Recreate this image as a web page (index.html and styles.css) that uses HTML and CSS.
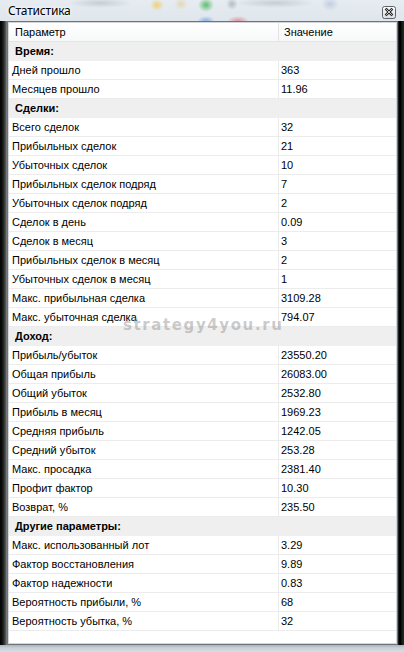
FILE: index.html
```
<!DOCTYPE html>
<html lang="ru">
<head>
<meta charset="utf-8">
<title>Статистика</title>
<link rel="stylesheet" href="styles.css">
</head>
<body>
<div class="window">
  <div class="titlebar">
    <span class="title">Статистика</span>
    <svg class="close" width="14" height="13" viewBox="0 0 14 13">
      <defs>
        <linearGradient id="cb" x1="0" y1="0" x2="0" y2="1">
          <stop offset="0" stop-color="#fbfcfd"/>
          <stop offset="1" stop-color="#d9dee3"/>
        </linearGradient>
      </defs>
      <rect x="0.5" y="0.5" width="13" height="12" rx="2" fill="url(#cb)" stroke="#5e6368"/>
      <path d="M4.5 3.5 L9.5 8.5 M9.5 3.5 L4.5 8.5" stroke="#2b2b2b" stroke-width="2.6" stroke-linecap="square"/>
      <path d="M4.5 3.5 L9.5 8.5 M9.5 3.5 L4.5 8.5" stroke="#f2f2f2" stroke-width="0.8" stroke-linecap="square"/>
    </svg>
  </div>
  <div class="frame">
    <div class="client">
      <div class="list">
        <div class="header"><div class="k">Параметр</div><div class="v">Значение</div></div>
        <div class="group">Время:</div>
        <div class="row"><div class="k">Дней прошло</div><div class="v">363</div></div>
        <div class="row"><div class="k">Месяцев прошло</div><div class="v">11.96</div></div>
        <div class="group">Сделки:</div>
        <div class="row"><div class="k">Всего сделок</div><div class="v">32</div></div>
        <div class="row"><div class="k">Прибыльных сделок</div><div class="v">21</div></div>
        <div class="row"><div class="k">Убыточных сделок</div><div class="v">10</div></div>
        <div class="row"><div class="k">Прибыльных сделок подряд</div><div class="v">7</div></div>
        <div class="row"><div class="k">Убыточных сделок подряд</div><div class="v">2</div></div>
        <div class="row"><div class="k">Сделок в день</div><div class="v">0.09</div></div>
        <div class="row"><div class="k">Сделок в месяц</div><div class="v">3</div></div>
        <div class="row"><div class="k">Прибыльных сделок в месяц</div><div class="v">2</div></div>
        <div class="row"><div class="k">Убыточных сделок в месяц</div><div class="v">1</div></div>
        <div class="row"><div class="k">Макс. прибыльная сделка</div><div class="v">3109.28</div></div>
        <div class="row"><div class="k">Макс. убыточная сделка</div><div class="v">794.07</div></div>
        <div class="group">Доход:</div>
        <div class="row"><div class="k">Прибыль/убыток</div><div class="v">23550.20</div></div>
        <div class="row"><div class="k">Общая прибыль</div><div class="v">26083.00</div></div>
        <div class="row"><div class="k">Общий убыток</div><div class="v">2532.80</div></div>
        <div class="row"><div class="k">Прибыль в месяц</div><div class="v">1969.23</div></div>
        <div class="row"><div class="k">Средняя прибыль</div><div class="v">1242.05</div></div>
        <div class="row"><div class="k">Средний убыток</div><div class="v">253.28</div></div>
        <div class="row"><div class="k">Макс. просадка</div><div class="v">2381.40</div></div>
        <div class="row"><div class="k">Профит фактор</div><div class="v">10.30</div></div>
        <div class="row"><div class="k">Возврат, %</div><div class="v">235.50</div></div>
        <div class="group">Другие параметры:</div>
        <div class="row"><div class="k">Макс. использованный лот</div><div class="v">3.29</div></div>
        <div class="row"><div class="k">Фактор восстановления</div><div class="v">9.89</div></div>
        <div class="row"><div class="k">Фактор надежности</div><div class="v">0.83</div></div>
        <div class="row"><div class="k">Вероятность прибыли, %</div><div class="v">68</div></div>
        <div class="row"><div class="k">Вероятность убытка, %</div><div class="v">32</div></div>
        <div class="watermark">strategy4you.ru</div>
      </div>
    </div>
  </div>
  <div class="bottom"></div>
</div>
</body>
</html>
```
FILE: styles.css
```
* { box-sizing: border-box; margin: 0; padding: 0; }
html, body { width: 404px; height: 652px; overflow: hidden; }
body {
  font-family: "Liberation Sans", Arial, sans-serif;
  font-size: 11px;
  color: #000;
  background: #dfe6ec;
}
.window {
  width: 404px;
  height: 652px;
  display: flex;
  flex-direction: column;
}
.titlebar {
  height: 21px;
  flex: none;
  display: flex;
  align-items: flex-start;
  padding: 0 8px;
  background:
    radial-gradient(ellipse 7px 6px at 157px 5px, rgba(240, 200, 80, .75), rgba(240, 200, 80, 0)),
    radial-gradient(ellipse 7px 6px at 181px 4px, rgba(225, 200, 130, .55), rgba(225, 200, 130, 0)),
    radial-gradient(ellipse 8px 7px at 206px 5px, rgba(70, 180, 90, .85), rgba(70, 180, 90, 0)),
    radial-gradient(ellipse 9px 5px at 206px 21px, rgba(80, 140, 220, .6), rgba(80, 140, 220, 0)),
    radial-gradient(ellipse 11px 5px at 238px 21px, rgba(220, 80, 100, .55), rgba(220, 80, 100, 0)),
    radial-gradient(ellipse 6px 6px at 232px 4px, rgba(130, 140, 150, .5), rgba(130, 140, 150, 0)),
    radial-gradient(ellipse 32px 5px at 100px 3px, rgba(140, 150, 160, .35), rgba(140, 150, 160, 0)),
    radial-gradient(ellipse 40px 5px at 275px 3px, rgba(140, 150, 160, .35), rgba(140, 150, 160, 0)),
    radial-gradient(ellipse 9px 7px at 330px 4px, rgba(140, 165, 200, .4), rgba(140, 165, 200, 0)),
    linear-gradient(#e6ecf1, #dfe6ec);
}
.title {
  font-family: "Noto Sans", "Open Sans", sans-serif;
  font-size: 12px;
  line-height: 21px;
  letter-spacing: -0.2px;
  color: #000;
  text-shadow: 0 0 5px #fff, 0 0 3px #fff;
}
.close {
  display: block;
  margin-left: auto;
  margin-top: 6px;
}
.frame {
  flex: 1;
  display: flex;
  padding: 0 6px 0 7px;
  background: linear-gradient(to right,
    #030303 0, #0b0f0b 2px, #2b2f2b 4px, #5d5f60 6px, #8b8e90 7px,
    #dfe6ec 7px, #dfe6ec 397px,
    #3a3d40 398px, #000 399px, #000 401px, #16221a 402px, #1d2a20 404px);
}
.client {
  flex: 1;
  border: 1px solid #6f7478;
  background: #fff;
}
.list {
  height: 100%;
  border: 1px solid #d3d6d9;
  background: #fff;
  position: relative;
  overflow: hidden;
}
.header {
  display: flex;
  height: 19px;
  background: linear-gradient(#ffffff, #f7f8f9);
  border-bottom: 1px solid #e2e4e6;
  line-height: 18px;
}
.header .k {
  width: 270px;
  padding-left: 6px;
  border-right: 1px solid #e1e3e5;
}
.header .v {
  flex: 1;
  padding-left: 5px;
}
.group {
  height: 19px;
  line-height: 19px;
  padding-left: 6px;
  font-weight: bold;
  background: #efefef;
}
.row {
  display: flex;
  height: 19px;
  line-height: 18px;
  border-bottom: 1px solid #ececec;
}
.row .k {
  width: 270px;
  padding-left: 3px;
  border-right: 1px solid #ececec;
  white-space: nowrap;
}
.row .v {
  flex: 1;
  padding-left: 2px;
}
.watermark {
  position: absolute;
  left: 114px;
  top: 292px;
  font-family: "DejaVu Sans", Verdana, sans-serif;
  font-weight: bold;
  font-size: 15px;
  line-height: 20px;
  letter-spacing: 1.6px;
  color: rgba(140, 140, 140, .45);
  white-space: nowrap;
  pointer-events: none;
}
.bottom {
  height: 7px;
  flex: none;
  background: linear-gradient(#a9b3bb, #c9d2d9 3px, #d7dee4);
}
```
